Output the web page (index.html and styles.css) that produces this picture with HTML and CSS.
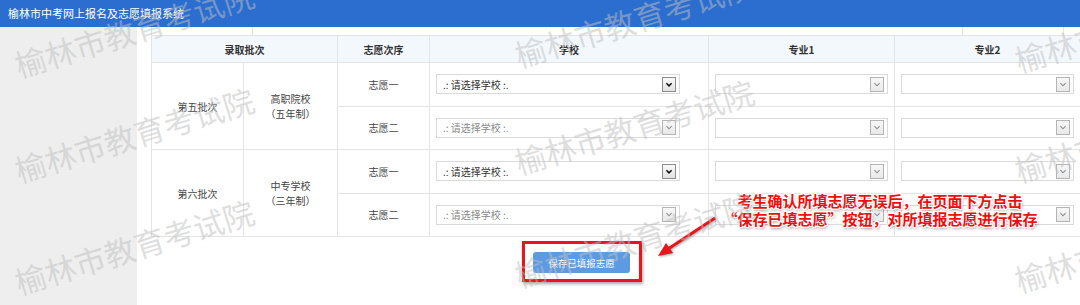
FILE: index.html
```html
<!DOCTYPE html>
<html lang="zh-CN">
<head>
    <meta charset="UTF-8">
    <title>榆林市中考网上报名及志愿填报系统</title>
    <link rel="stylesheet" href="styles.css">
</head>
<body>
<div class="page">
    <!-- 顶部标题栏 -->
    <div class="topbar">榆林市中考网上报名及志愿填报系统</div>

    <div class="wrap">
        <div class="sidebar"></div>

        <div class="main">
            <!-- 上一张表格的末尾 -->
            <div class="prev-table"><span></span><span></span><span></span><span></span></div>

            <table class="zy-table">
                <colgroup>
                    <col style="width: 92px">
                    <col style="width: 94px">
                    <col style="width: 92px">
                    <col style="width: 279px">
                    <col style="width: 186px">
                    <col style="width: 186px">
                </colgroup>
                <thead>
                    <tr>
                        <th colspan="2">录取批次</th>
                        <th>志愿次序</th>
                        <th>学校</th>
                        <th>专业1</th>
                        <th>专业2</th>
                    </tr>
                </thead>
                <tbody>
                    <tr>
                        <td rowspan="2">第五批次</td>
                        <td rowspan="2">高职院校<br>（五年制）</td>
                        <td>志愿一</td>
                        <td class="left"><div class="sel school"><span class="sel-text">.: 请选择学校 :.</span><span class="sel-btn"><svg viewBox="0 0 14 15"><path d="M4 6 L7 9 L10 6"/></svg></span></div></td>
                        <td><div class="sel off"><span class="sel-text"></span><span class="sel-btn"><svg viewBox="0 0 14 15"><path d="M4 6 L7 9 L10 6"/></svg></span></div></td>
                        <td><div class="sel off"><span class="sel-text"></span><span class="sel-btn"><svg viewBox="0 0 14 15"><path d="M4 6 L7 9 L10 6"/></svg></span></div></td>
                    </tr>
                    <tr>
                        <td>志愿二</td>
                        <td class="left"><div class="sel school off"><span class="sel-text">.: 请选择学校 :.</span><span class="sel-btn"><svg viewBox="0 0 14 15"><path d="M4 6 L7 9 L10 6"/></svg></span></div></td>
                        <td><div class="sel off"><span class="sel-text"></span><span class="sel-btn"><svg viewBox="0 0 14 15"><path d="M4 6 L7 9 L10 6"/></svg></span></div></td>
                        <td><div class="sel off"><span class="sel-text"></span><span class="sel-btn"><svg viewBox="0 0 14 15"><path d="M4 6 L7 9 L10 6"/></svg></span></div></td>
                    </tr>
                    <tr>
                        <td rowspan="2">第六批次</td>
                        <td rowspan="2">中专学校<br>（三年制）</td>
                        <td>志愿一</td>
                        <td class="left"><div class="sel school"><span class="sel-text">.: 请选择学校 :.</span><span class="sel-btn"><svg viewBox="0 0 14 15"><path d="M4 6 L7 9 L10 6"/></svg></span></div></td>
                        <td><div class="sel off"><span class="sel-text"></span><span class="sel-btn"><svg viewBox="0 0 14 15"><path d="M4 6 L7 9 L10 6"/></svg></span></div></td>
                        <td><div class="sel off"><span class="sel-text"></span><span class="sel-btn"><svg viewBox="0 0 14 15"><path d="M4 6 L7 9 L10 6"/></svg></span></div></td>
                    </tr>
                    <tr>
                        <td>志愿二</td>
                        <td class="left"><div class="sel school off"><span class="sel-text">.: 请选择学校 :.</span><span class="sel-btn"><svg viewBox="0 0 14 15"><path d="M4 6 L7 9 L10 6"/></svg></span></div></td>
                        <td><div class="sel off"><span class="sel-text"></span><span class="sel-btn"><svg viewBox="0 0 14 15"><path d="M4 6 L7 9 L10 6"/></svg></span></div></td>
                        <td><div class="sel off"><span class="sel-text"></span><span class="sel-btn"><svg viewBox="0 0 14 15"><path d="M4 6 L7 9 L10 6"/></svg></span></div></td>
                    </tr>
                </tbody>
            </table>

            <!-- 保存按钮（红框为标注） -->
            <div class="save-row">
                <span class="mark-box"><button class="btn-save">保存已填报志愿</button></span>
            </div>
        </div>
    </div>

    <!-- 标注：文字和箭头 -->
    <div class="note">考生确认所填志愿无误后，在页面下方点击<br>“保存已填志愿”按钮，对所填报志愿进行保存</div>
    <svg class="note-arrow" width="72" height="50" viewBox="0 0 72 50">
        <line x1="65" y1="6" x2="18" y2="37"/>
        <polygon points="8,44 23,41 16,31"/>
    </svg>

    <!-- 水印 -->
    <div class="wm-layer">
        <span class="wm" style="left: 20px; top: 49px">榆林市教育考试院</span>
        <span class="wm" style="left: 20px; top: 154px">榆林市教育考试院</span>
        <span class="wm" style="left: 20px; top: 266px">榆林市教育考试院</span>
        <span class="wm" style="left: 520px; top: 39px">榆林市教育考试院</span>
        <span class="wm" style="left: 520px; top: 146px">榆林市教育考试院</span>
        <span class="wm" style="left: 520px; top: 259px">榆林市教育考试院</span>
        <span class="wm" style="left: 1020px; top: 44px">榆林市教育考试院</span>
        <span class="wm" style="left: 1020px; top: 154px">榆林市教育考试院</span>
        <span class="wm" style="left: 1020px; top: 264px">榆林市教育考试院</span>
    </div>
</div>
</body>
</html>
```

FILE: styles.css
```css
body {
    margin: 0;
    font-family: "Noto Sans CJK SC", "Noto Sans", sans-serif;
    font-size: 10px;
    color: #444;
    background-color: white;
}
.page {
    position: relative;
    height: 305px;
    overflow: hidden;
}
.topbar {
    height: 27px;
    line-height: 27px;
    padding-left: 8px;
    background-color: #2c6ecf;
    color: white;
    font-size: 11px;
}
.wrap {
    display: flex;
    height: 278px;
}
.sidebar {
    width: 137px;
    flex-shrink: 0;
    background-color: #eeeeee;
}
.main {
    flex: 1;
    padding-left: 14px;
}
.prev-table {
    display: grid;
    grid-template-columns: 101px 710px 101px 1fr;
    height: 8px;
    border-left: 1px solid #e4e4e4;
}
.prev-table span {
    border-right: 1px solid #e4e4e4;
}
.zy-table {
    border-collapse: collapse;
    table-layout: fixed;
    width: 929px;
}
.zy-table th,
.zy-table td {
    border: 1px solid #e4e4e4;
    padding: 0 6px;
    text-align: center;
    line-height: 15px;
}
.zy-table th {
    height: 26px;
    background-color: #f3f8fd;
    color: #333;
    font-weight: bold;
}
.zy-table td {
    height: 42.5px;
}
.zy-table td.left {
    text-align: left;
}
.sel {
    display: flex;
    align-items: center;
    justify-content: space-between;
    height: 20px;
    box-sizing: border-box;
    border: 1px solid #dadada;
    background-color: white;
    padding: 0 3px 0 6px;
    color: #333;
    text-align: left;
}
.sel.school {
    width: 244px;
}
.sel.off {
    color: #8a8a8a;
}
.sel-btn {
    width: 14px;
    height: 15px;
    box-sizing: border-box;
    border: 1px solid #8c8c8c;
    background: linear-gradient(#fafafa, #e2e2e2);
    display: flex;
}
.sel-btn svg {
    width: 12px;
    height: 13px;
}
.sel-btn path {
    fill: none;
    stroke: #111;
    stroke-width: 1.8;
}
.sel.off .sel-btn {
    border-color: #b4b4b4;
    background: linear-gradient(#f7f7f7, #e9e9e9);
}
.sel.off .sel-btn path {
    stroke: #8d8d8d;
    stroke-width: 1.3;
}
.save-row {
    padding: 4px 0 0 371px;
}
.mark-box {
    display: inline-block;
    padding: 8px 9px 6px 8px;
    border: 3px solid #e8151b;
    box-shadow: 1px 2px 3px rgba(0, 0, 0, 0.35);
}
.btn-save {
    display: block;
    width: 97px;
    height: 21px;
    padding: 0;
    border: none;
    border-radius: 3px;
    background-color: #5c9be2;
    color: white;
    font-family: inherit;
    font-size: 9.5px;
}
.note {
    position: absolute;
    left: 720px;
    top: 192px;
    width: 320px;
    text-align: center;
    font-size: 15px;
    line-height: 18px;
    font-weight: bold;
    color: #f20d0d;
    text-shadow: 1px 0 #fff, -1px 0 #fff, 0 1px #fff, 0 -1px #fff,
                 1px 1px #fff, -1px -1px #fff, 1px -1px #fff, -1px 1px #fff,
                 1px 2px 3px rgba(0, 0, 0, 0.45);
}
.note-arrow {
    position: absolute;
    left: 650px;
    top: 212px;
    filter: drop-shadow(1px 1px 1px rgba(0, 0, 0, 0.35));
}
.note-arrow line {
    stroke: #e8151b;
    stroke-width: 3;
}
.note-arrow polygon {
    fill: #e8151b;
}
.wm-layer {
    position: absolute;
    top: 0;
    left: 0;
    right: 0;
    bottom: 0;
    pointer-events: none;
}
.wm {
    position: absolute;
    font-size: 31px;
    line-height: 31px;
    white-space: nowrap;
    color: rgba(190, 190, 190, 0.5);
    transform: rotate(-17deg);
    transform-origin: 0 100%;
}
```
